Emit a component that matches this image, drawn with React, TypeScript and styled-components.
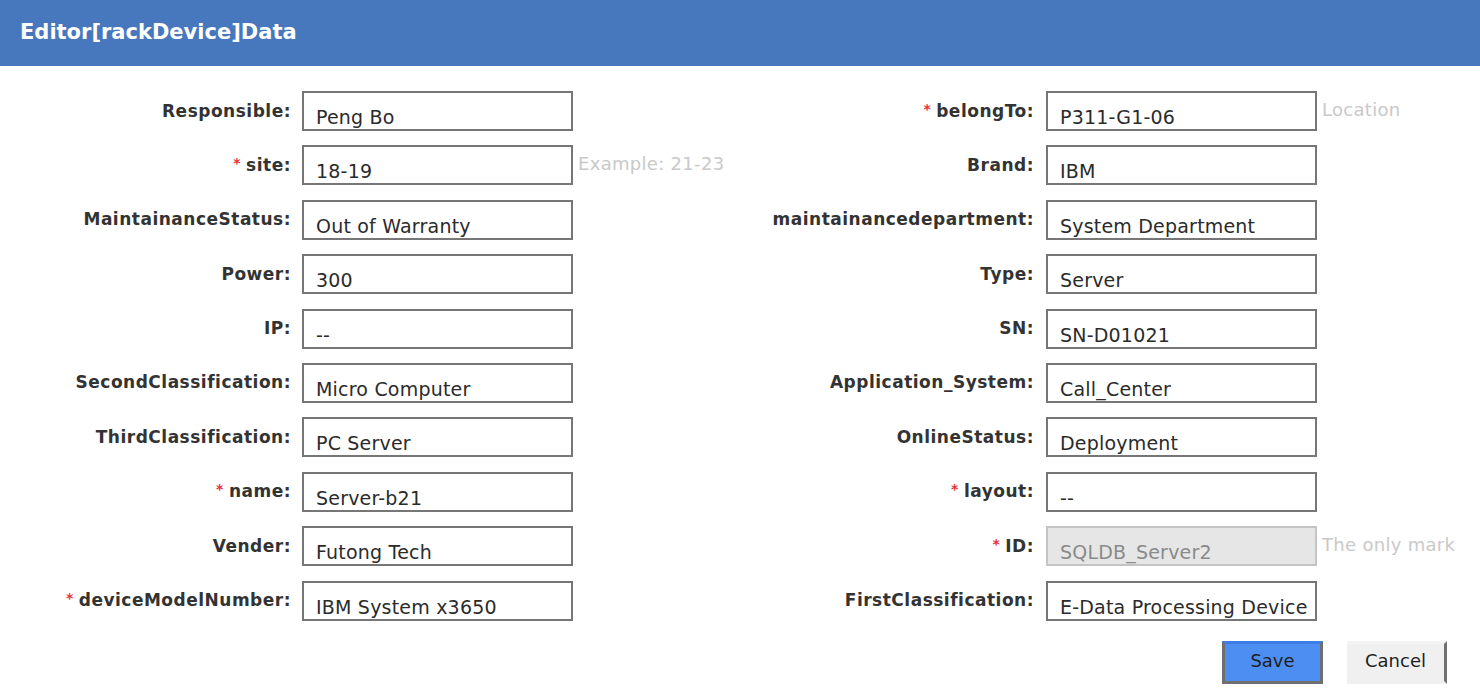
import React from "react";
import styled, { createGlobalStyle } from "styled-components";

const Global = createGlobalStyle`
  html, body { margin: 0; padding: 0; background: #fff; }
  body { font-family: "DejaVu Sans", "Noto Sans", sans-serif; }
`;

const Dialog = styled.div`
  width: 1480px;
  height: 696px;
  background: #fff;
  overflow: hidden;
`;

const Header = styled.div`
  height: 66px;
  background: #4778bd;
  color: #fff;
  display: flex;
  align-items: center;
  padding-left: 20px;
  font-family: "DejaVu Sans", sans-serif;
  font-weight: 700;
  font-size: 21px;
  letter-spacing: 0px;
  box-sizing: border-box;
  padding-bottom: 2px;
`;

const Form = styled.div`
  display: grid;
  grid-template-columns: 291px 455px 288px 1fr;
  grid-auto-rows: 40px;
  row-gap: 14.4px;
  padding-top: 25px;
`;

const Label = styled.div`
  display: flex;
  justify-content: flex-end;
  align-items: center;
  padding-bottom: 1px;
  font-family: "DejaVu Sans", sans-serif;
  font-weight: 700;
  font-size: 17px;
  color: #333;
  white-space: nowrap;
  letter-spacing: 0.5px;
`;

const Star = styled.span`
  color: #e8303a;
  font-size: 14px;
  margin-right: 5px;
  position: relative;
  top: -2px;
`;

const Field = styled.div<{ $pad: number }>`
  display: flex;
  align-items: flex-start;
  padding-left: ${(p) => p.$pad}px;
`;

const Box = styled.div<{ $disabled?: boolean }>`
  width: 271px;
  height: 40px;
  box-sizing: border-box;
  border: 2px solid ${(p) => (p.$disabled ? "#c4c4c4" : "#767676")};
  background: ${(p) => (p.$disabled ? "#e6e6e6" : "#fff")};
  color: ${(p) => (p.$disabled ? "#8a8a8a" : "#2b2b2b")};
  font-family: "DejaVu Sans", sans-serif;
  font-size: 19px;
  letter-spacing: 0.2px;
  padding: 12px 0 0 12px;
  line-height: 24px;
  white-space: nowrap;
  overflow: hidden;
`;

const Hint = styled.span`
  color: #c9c9c9;
  font-family: "DejaVu Sans", sans-serif;
  font-size: 18px;
  letter-spacing: 0.3px;
  margin-left: 5px;
  margin-top: 8px;
  white-space: nowrap;
`;

const Actions = styled.div`
  display: flex;
  justify-content: flex-end;
  gap: 24px;
  padding: 20px 33px 0 0;
`;

const Button = styled.button<{ $primary?: boolean }>`
  width: ${(p) => (p.$primary ? 101 : 100)}px;
  height: 43px;
  box-sizing: border-box;
  font-family: "DejaVu Sans", sans-serif;
  font-size: 18px;
  color: #1f1f1f;
  padding: 0 0 3px;
  background: ${(p) => (p.$primary ? "#4d8ef2" : "#f0f0f0")};
  border-style: solid;
  border-width: ${(p) => (p.$primary ? "3px" : "3px 3px 3px 0")};
  border-color: ${(p) =>
    p.$primary
      ? "#3d7de6 #6f6f6f #6f6f6f #6f6f6f"
      : "#f4f4f4 #707070 #f0f0f0 #f0f0f0"};
  cursor: pointer;
`;

type F = { label: string; value: string; req?: boolean; hint?: string; disabled?: boolean };

const left: F[] = [
  { label: "Responsible:", value: "Peng Bo" },
  { label: "site:", value: "18-19", req: true, hint: "Example: 21-23" },
  { label: "MaintainanceStatus:", value: "Out of Warranty" },
  { label: "Power:", value: "300" },
  { label: "IP:", value: "--" },
  { label: "SecondClassification:", value: "Micro Computer" },
  { label: "ThirdClassification:", value: "PC Server" },
  { label: "name:", value: "Server-b21", req: true },
  { label: "Vender:", value: "Futong Tech" },
  { label: "deviceModelNumber:", value: "IBM System x3650", req: true },
];

const right: F[] = [
  { label: "belongTo:", value: "P311-G1-06", req: true, hint: "Location" },
  { label: "Brand:", value: "IBM" },
  { label: "maintainancedepartment:", value: "System Department" },
  { label: "Type:", value: "Server" },
  { label: "SN:", value: "SN-D01021" },
  { label: "Application_System:", value: "Call_Center" },
  { label: "OnlineStatus:", value: "Deployment" },
  { label: "layout:", value: "--", req: true },
  { label: "ID:", value: "SQLDB_Server2", req: true, hint: "The only mark", disabled: true },
  { label: "FirstClassification:", value: "E-Data Processing Device" },
];

const Cell = ({ f, pad }: { f: F; pad: number }) => (
  <>
    <Label>
      {f.req && <Star>*</Star>}
      {f.label}
    </Label>
    <Field $pad={pad}>
      <Box $disabled={f.disabled}>{f.value}</Box>
      {f.hint && <Hint>{f.hint}</Hint>}
    </Field>
  </>
);

export default function App() {
  return (
    <>
      <Global />
      <Dialog>
        <Header>Editor[rackDevice]Data</Header>
        <Form>
          {left.map((f, i) => (
            <React.Fragment key={i}>
              <Cell f={f} pad={11} />
              <Cell f={right[i]} pad={12} />
            </React.Fragment>
          ))}
        </Form>
        <Actions>
          <Button $primary>Save</Button>
          <Button>Cancel</Button>
        </Actions>
      </Dialog>
    </>
  );
}
